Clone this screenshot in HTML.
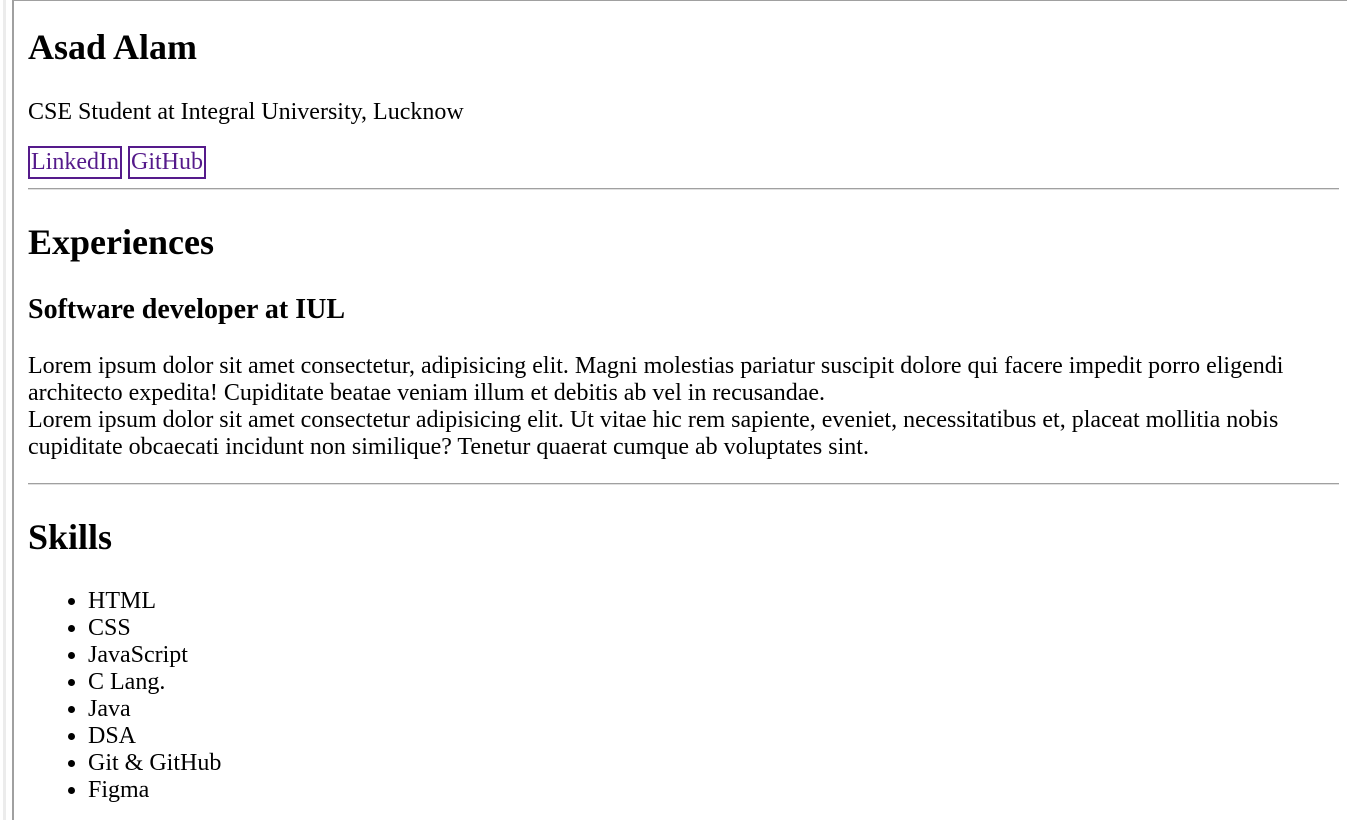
<!DOCTYPE html>
<html><head><meta charset="utf-8"><style>
html,body{margin:0;padding:0;background:#fff;width:1347px;height:820px;overflow:hidden}
.strip{position:absolute;left:3px;top:0;width:3px;height:820px;background:#ececec}
.frame{position:absolute;left:12px;top:0;width:1335px;height:820px;border-left:2px solid #a0a0a0;border-top:1px solid #a0a0a0;box-sizing:border-box}
.c{position:absolute;left:28px;top:0;width:1311px;font-family:"Liberation Serif",serif;font-size:24px;line-height:27px;color:#000}
h1,h2{font-size:36px;line-height:41px;margin:0;font-weight:bold}
h3{font-size:28px;line-height:32px;margin:0;font-weight:bold}
p{margin:0}
a{color:#551a8b;text-decoration:none;border:2px solid #551a8b;padding:1px 1px 2px}
hr{border:0;border-top:1px solid #a0a0a0;border-bottom:1px solid #e0e0e0;margin:0;height:0}
ul{margin:0;padding-left:60px}
</style></head><body>
<div class="strip"></div>
<div class="frame"></div>
<div class="c">
<h1 style="margin-top:27px">Asad Alam</h1>
<p style="margin-top:31px">CSE Student at Integral University, Lucknow</p>
<p style="margin-top:23px"><a>LinkedIn</a>&nbsp;<a>GitHub</a></p>
<hr style="margin-top:12px">
<h2 style="margin-top:32px">Experiences</h2>
<h3 style="margin-top:31px">Software developer at IUL</h3>
<p style="margin-top:27px">Lorem ipsum dolor sit amet consectetur, adipisicing elit. Magni molestias pariatur suscipit dolore qui facere impedit porro eligendi architecto expedita! Cupiditate beatae veniam illum et debitis ab vel in recusandae.<br>Lorem ipsum dolor sit amet consectetur adipisicing elit. Ut vitae hic rem sapiente, eveniet, necessitatibus et, placeat mollitia nobis cupiditate obcaecati incidunt non similique? Tenetur quaerat cumque ab voluptates sint.</p>
<hr style="margin-top:22px">
<h2 style="margin-top:32px">Skills</h2>
<ul style="margin-top:30px">
<li>HTML</li><li>CSS</li><li>JavaScript</li><li>C Lang.</li><li>Java</li><li>DSA</li><li>Git &amp; GitHub</li><li>Figma</li>
</ul>
</div>
</body></html>
